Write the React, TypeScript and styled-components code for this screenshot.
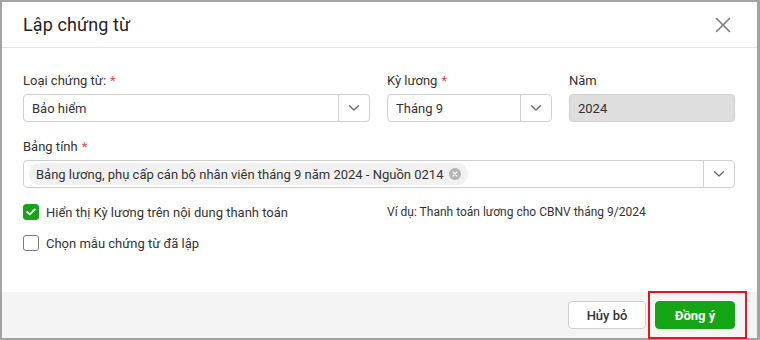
import React from "react";
import styled, { createGlobalStyle } from "styled-components";

const Global = createGlobalStyle`
  html, body { margin: 0; padding: 0; background: #fff; }
  body { font-family: Roboto, "Noto Sans", Arial, sans-serif; color: #262626; }
  * { box-sizing: border-box; }
`;

const Frame = styled.div`
  position: relative;
  width: 760px;
  height: 340px;
  border-style: solid;
  border-color: #a3a3a3;
  border-width: 2px 3px 2px 2px;
  background: #fff;
  display: flex;
  flex-direction: column;
`;

const Header = styled.div`
  height: 46px;
  flex: none;
  display: flex;
  align-items: center;
  justify-content: space-between;
  padding: 0 24px 0 21px;
  border-bottom: 1px solid #e3e3e3;
`;

const Title = styled.h1`
  margin: 0;
  font-size: 18px;
  font-weight: 400;
  color: #1f1f1f;
  letter-spacing: 0.1px;
`;

const CloseBtn = styled.button`
  border: 0;
  background: none;
  padding: 0;
  width: 20px;
  height: 20px;
  display: flex;
  align-items: center;
  justify-content: center;
  cursor: pointer;
`;

const Body = styled.div`
  flex: 1;
  padding: 25px 22px 0 21px;
  display: flex;
  flex-direction: column;
`;

const Grid = styled.div`
  display: grid;
  grid-template-columns: 347px 165px 166px;
  column-gap: 17px;
`;

const Field = styled.div`
  display: flex;
  flex-direction: column;
`;

const Label = styled.label`
  font-size: 13px;
  line-height: 16px;
  color: #333;
  margin-bottom: 5px;
`;

const Req = styled.span`
  color: #ef4444;
  margin-left: 4px;
`;

const SelectBox = styled.div<{ $disabled?: boolean }>`
  height: 28px;
  border: 1px solid #cfcfcf;
  border-radius: 4px;
  background: ${(p) => (p.$disabled ? "#dedede" : "#fff")};
  display: flex;
  align-items: stretch;
  font-size: 13px;
  color: #333;
`;

const SelectValue = styled.div`
  flex: 1;
  display: flex;
  align-items: center;
  padding-left: 8px;
  min-width: 0;
`;

const Arrow = styled.div`
  width: 31px;
  border-left: 1px solid #cfcfcf;
  display: flex;
  align-items: center;
  justify-content: center;
`;

const SheetField = styled(Field)`
  margin-top: 17px;
`;

const MultiValue = styled(SelectValue)`
  padding-left: 5px;
`;

const Chip = styled.span`
  display: inline-flex;
  align-items: center;
  gap: 6px;
  height: 22px;
  padding: 0 7px;
  border-radius: 11px;
  background: #f1f1f1;
  color: #333;
  font-size: 13px;
`;

const ChipX = styled.span`
  width: 12px;
  height: 12px;
  border-radius: 50%;
  background: #b3b3b3;
  display: inline-flex;
  align-items: center;
  justify-content: center;
`;

const CheckRow = styled.div`
  display: grid;
  grid-template-columns: 364px 1fr;
  align-items: center;
  margin-top: 16px;
  font-size: 13px;
  color: #333;
`;

const CheckLabel = styled.label`
  display: flex;
  align-items: center;
  gap: 7px;
`;

const Box = styled.span<{ $on?: boolean }>`
  width: 16px;
  height: 16px;
  border-radius: 3px;
  border: 1px solid ${(p) => (p.$on ? "#18a418" : "#7a7a7a")};
  background: ${(p) => (p.$on ? "#18a418" : "#fff")};
  display: inline-flex;
  align-items: center;
  justify-content: center;
`;

const Hint = styled.span`
  font-size: 12px;
  color: #333;
`;

const SecondRow = styled(CheckRow)`
  margin-top: 15px;
`;

const Footer = styled.div`
  height: 46px;
  flex: none;
  background: #f4f4f4;
  display: flex;
  align-items: center;
  justify-content: flex-end;
  gap: 9px;
  padding: 0 22px 0 0;
`;

const Button = styled.button<{ $primary?: boolean }>`
  height: 28px;
  border-radius: 4px;
  font-family: inherit;
  font-size: 13px;
  cursor: pointer;
  padding: 0;
  width: ${(p) => (p.$primary ? "80px" : "78px")};
  border: 1px solid ${(p) => (p.$primary ? "#14a514" : "#cfcfcf")};
  background: ${(p) => (p.$primary ? "#14a514" : "#fff")};
  color: ${(p) => (p.$primary ? "#fff" : "#333")};
  font-weight: ${(p) => (p.$primary ? 700 : 500)};
`;

const Highlight = styled.div`
  position: absolute;
  left: 646px;
  top: 289px;
  width: 99px;
  height: 48px;
  border: 2px solid #e3161b;
  pointer-events: none;
`;

const Chevron = () => (
  <svg width="12" height="8" viewBox="0 0 12 8" fill="none">
    <path d="M1.5 1.8 6 6 10.5 1.8" stroke="#666" strokeWidth="1.3" strokeLinecap="round" strokeLinejoin="round" />
  </svg>
);

export default function App() {
  return (
    <>
      <Global />
      <Frame>
        <Header>
          <Title>Lập chứng từ</Title>
          <CloseBtn aria-label="Đóng">
            <svg width="16" height="16" viewBox="0 0 16 16">
              <path d="M1.5 1.5 14.5 14.5M14.5 1.5 1.5 14.5" stroke="#777" strokeWidth="1.5" strokeLinecap="round" />
            </svg>
          </CloseBtn>
        </Header>
        <Body>
          <Grid>
            <Field>
              <Label>
                Loại chứng từ:<Req>*</Req>
              </Label>
              <SelectBox>
                <SelectValue>Bảo hiểm</SelectValue>
                <Arrow>
                  <Chevron />
                </Arrow>
              </SelectBox>
            </Field>
            <Field>
              <Label>
                Kỳ lương<Req>*</Req>
              </Label>
              <SelectBox>
                <SelectValue>Tháng 9</SelectValue>
                <Arrow>
                  <Chevron />
                </Arrow>
              </SelectBox>
            </Field>
            <Field>
              <Label>Năm</Label>
              <SelectBox $disabled>
                <SelectValue>2024</SelectValue>
              </SelectBox>
            </Field>
          </Grid>
          <SheetField>
            <Label>
              Bảng tính<Req>*</Req>
            </Label>
            <SelectBox>
              <MultiValue>
                <Chip>
                  Bảng lương, phụ cấp cán bộ nhân viên tháng 9 năm 2024 - Nguồn 0214
                  <ChipX>
                    <svg width="6" height="6" viewBox="0 0 6 6">
                      <path d="M1 1 5 5M5 1 1 5" stroke="#fff" strokeWidth="1.2" strokeLinecap="round" />
                    </svg>
                  </ChipX>
                </Chip>
              </MultiValue>
              <Arrow>
                <Chevron />
              </Arrow>
            </SelectBox>
          </SheetField>
          <CheckRow>
            <CheckLabel>
              <Box $on>
                <svg width="10" height="8" viewBox="0 0 10 8">
                  <path d="M1.2 4 3.8 6.4 8.8 1.4" stroke="#fff" strokeWidth="1.8" fill="none" strokeLinecap="round" strokeLinejoin="round" />
                </svg>
              </Box>
              Hiển thị Kỳ lương trên nội dung thanh toán
            </CheckLabel>
            <Hint>Ví dụ: Thanh toán lương cho CBNV tháng 9/2024</Hint>
          </CheckRow>
          <SecondRow>
            <CheckLabel>
              <Box />
              Chọn mẫu chứng từ đã lập
            </CheckLabel>
          </SecondRow>
        </Body>
        <Footer>
          <Button>Hủy bỏ</Button>
          <Button $primary>Đồng ý</Button>
        </Footer>
        <Highlight />
      </Frame>
    </>
  );
}
